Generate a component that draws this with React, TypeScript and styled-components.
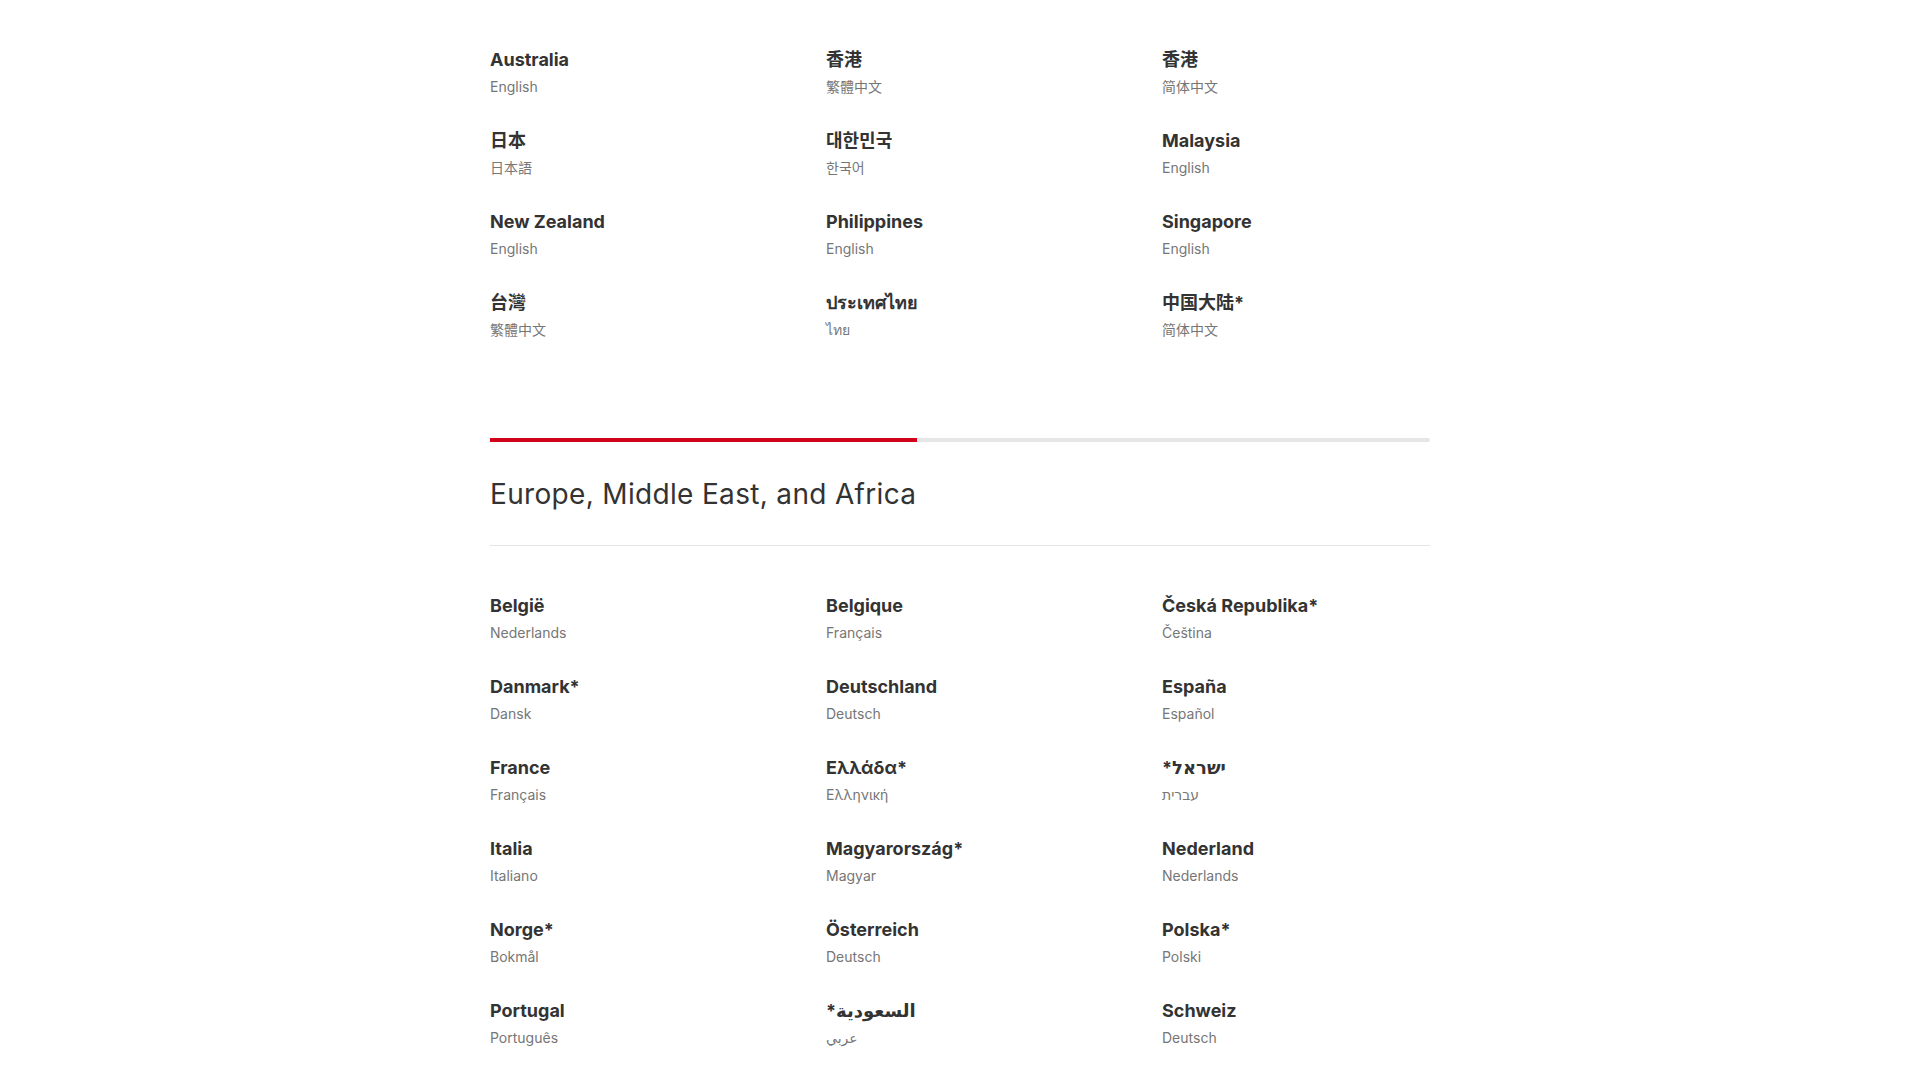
import React from 'react';
import styled, { createGlobalStyle } from 'styled-components';

type Locale = { name: string; lang: string; rtl?: boolean };

const asiaPacific: Locale[] = [
  { name: 'Australia', lang: 'English' },
  { name: '香港', lang: '繁體中文' },
  { name: '香港', lang: '简体中文' },
  { name: '日本', lang: '日本語' },
  { name: '대한민국', lang: '한국어' },
  { name: 'Malaysia', lang: 'English' },
  { name: 'New Zealand', lang: 'English' },
  { name: 'Philippines', lang: 'English' },
  { name: 'Singapore', lang: 'English' },
  { name: '台灣', lang: '繁體中文' },
  { name: 'ประเทศไทย', lang: 'ไทย' },
  { name: '中国大陆*', lang: '简体中文' },
];

const emea: Locale[] = [
  { name: 'België', lang: 'Nederlands' },
  { name: 'Belgique', lang: 'Français' },
  { name: 'Česká Republika*', lang: 'Čeština' },
  { name: 'Danmark*', lang: 'Dansk' },
  { name: 'Deutschland', lang: 'Deutsch' },
  { name: 'España', lang: 'Español' },
  { name: 'France', lang: 'Français' },
  { name: 'Ελλάδα*', lang: 'Ελληνική' },
  { name: 'ישראל*', lang: 'עברית', rtl: true },
  { name: 'Italia', lang: 'Italiano' },
  { name: 'Magyarország*', lang: 'Magyar' },
  { name: 'Nederland', lang: 'Nederlands' },
  { name: 'Norge*', lang: 'Bokmål' },
  { name: 'Österreich', lang: 'Deutsch' },
  { name: 'Polska*', lang: 'Polski' },
  { name: 'Portugal', lang: 'Português' },
  { name: 'السعودية*', lang: 'عربي', rtl: true },
  { name: 'Schweiz', lang: 'Deutsch' },
];

const GlobalStyle = createGlobalStyle`
  html, body {
    margin: 0;
    padding: 0;
    background: #ffffff;
  }
  body {
    font-family: Inter, "Noto Sans", "Noto Sans CJK SC", "DejaVu Sans", sans-serif;
    color: #333333;
  }
`;

const Page = styled.div`
  width: 940px;
  margin: 0 auto;
`;

const Section = styled.section`
  padding-bottom: 100px;
`;

const Grid = styled.div<{ $top: number }>`
  display: grid;
  grid-template-columns: repeat(3, 1fr);
  column-gap: 68px;
  row-gap: 31px;
  padding-top: ${(p) => p.$top}px;
`;

const Item = styled.a`
  display: flex;
  flex-direction: column;
  gap: 4px;
  text-decoration: none;
  cursor: pointer;
`;

const Name = styled.div`
  font-size: 18px;
  line-height: 26px;
  font-weight: 700;
  color: #333333;
  text-align: left;
`;

const Lang = styled.div`
  font-size: 14px;
  line-height: 20px;
  font-weight: 400;
  color: #767676;
  text-align: left;
`;

const Track = styled.div`
  display: flex;
  height: 4px;
  margin-top: -2px;
  background: #e6e6e6;
  border-radius: 2px;
`;

const TrackFill = styled.div`
  width: 427px;
  height: 100%;
  background: #d0021b;
`;

const Heading = styled.h2`
  margin: 35px 0 0;
  padding-bottom: 34px;
  border-bottom: 1px solid #e5e5e5;
  font-size: 28px;
  line-height: 34px;
  font-weight: 400;
  letter-spacing: 0.33px;
  color: #333333;
`;

const LocaleGrid: React.FC<{ items: Locale[]; top: number }> = ({ items, top }) => (
  <Grid $top={top}>
    {items.map((item, i) => (
      <Item key={i}>
        <Name dir={item.rtl ? 'rtl' : undefined}>{item.name}</Name>
        <Lang dir={item.rtl ? 'rtl' : undefined}>{item.lang}</Lang>
      </Item>
    ))}
  </Grid>
);

const App: React.FC = () => (
  <>
    <GlobalStyle />
    <Page>
      <Section>
        <LocaleGrid items={asiaPacific} top={47} />
      </Section>
      <Track>
        <TrackFill />
      </Track>
      <Heading>Europe, Middle East, and Africa</Heading>
      <LocaleGrid items={emea} top={47} />
    </Page>
  </>
);

export default App;
